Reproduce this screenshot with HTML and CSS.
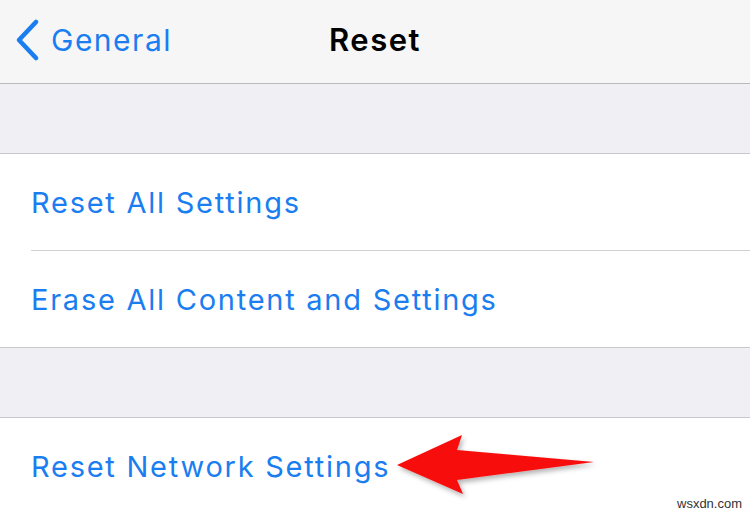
FILE: index.html
```html
<!DOCTYPE html>
<html>
<head>
<meta charset="utf-8">
<link rel="stylesheet" href="styles.css">
</head>
<body>
<div class="screen">
  <header class="navbar">
    <div class="back">
      <svg class="chev" width="28" height="44" viewBox="0 0 28 44"><path d="M22 4 L5 22 L22 40" fill="none" stroke="#1a7ef0" stroke-width="4.6" stroke-linecap="round" stroke-linejoin="round"/></svg>
      <span class="back-label">General</span>
    </div>
    <div class="title">Reset</div>
  </header>
  <div class="gap"></div>
  <section class="group">
    <div class="row"><span class="label">Reset All Settings</span></div>
    <div class="row"><span class="label">Erase All Content and Settings</span></div>
  </section>
  <div class="gap"></div>
  <section class="group final">
    <div class="row last">
      <span class="label">Reset Network Settings</span>
      <svg class="arrow" width="230" height="80" viewBox="0 0 230 80">
        <defs>
          <filter id="sh" x="-10%" y="-20%" width="130%" height="150%">
            <feDropShadow dx="2" dy="3" stdDeviation="2.5" flood-color="#000" flood-opacity="0.3"/>
          </filter>
        </defs>
        <path filter="url(#sh)" d="M7 37 L72 7 L67 22 L204 34 L67 52 L73 66 Z" fill="#f80c0c"/>
      </svg>
      <span class="mark">wsxdn.com</span>
    </div>
  </section>
</div>
</body>
</html>
```
FILE: styles.css
```css
html, body { margin: 0; padding: 0; }
body { width: 750px; height: 516px; overflow: hidden; background: #fff; font-family: Inter, "Liberation Sans", Arial, sans-serif; }
.screen { width: 750px; height: 516px; display: flex; flex-direction: column; }
.navbar { height: 83px; flex: none; background: #f6f6f7; border-bottom: 1px solid #b9b9bc; position: relative; display: flex; align-items: center; }
.back { display: flex; align-items: center; padding-left: 14px; gap: 9px; margin-top: -4px; }
.back-label { color: #1a7ef0; font-size: 30px; letter-spacing: 1.5px; }
.title { position: absolute; left: 0; right: 0; top: 0; height: 83px; line-height: 80px; text-align: center; font-weight: 600; font-size: 31px; letter-spacing: 1.5px; color: #000; pointer-events: none; }
.gap { height: 69px; flex: none; background: #efeff4; border-bottom: 1px solid #c8c7cc; }
.group { background: #fff; border-bottom: 1px solid #c8c7cc; flex: none; }
.group.final { border-bottom: none; }
.row { height: 96px; margin-left: 31px; display: flex; align-items: center; border-bottom: 1px solid #d2d2d5; position: relative; }
.row:last-child { border-bottom: none; }
.row.last { height: 97px; }
.label { color: #1a7ef0; font-size: 29px; letter-spacing: 1.75px; }
.arrow { position: absolute; left: 359px; top: 10px; }
.mark { position: absolute; left: 646px; top: 78px; font-size: 13px; color: #333; font-family: "Liberation Sans", Arial, sans-serif; letter-spacing: 0; }
```
